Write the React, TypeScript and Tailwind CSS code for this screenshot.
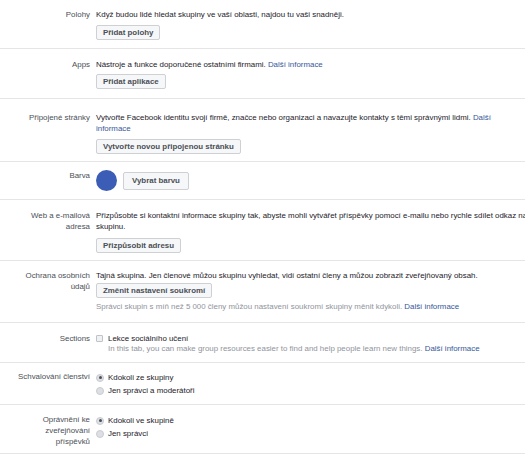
import React from 'react';

const font = { fontFamily: '"Liberation Sans", Arial, sans-serif' };

const Btn: React.FC<{ children: React.ReactNode; className?: string }> = ({ children, className = '' }) => (
  <button
    className={`inline-flex items-center h-[15px] px-[6px] bg-[#f6f7f9] border border-[#ced0d4] rounded-[2px] text-[7.9px] font-bold text-[#4b4f56] leading-none ${className}`}
  >
    {children}
  </button>
);

const Row: React.FC<{ label: React.ReactNode; children: React.ReactNode; className?: string }> = ({ label, children, className = '' }) => (
  <div className={`flex border-b border-[#e5e5e5] ${className}`}>
    <div className="w-[90px] shrink-0 text-right text-[#4b4f56] leading-[11px]">{label}</div>
    <div className="pl-[6px] flex-1 text-[#1d2129] leading-[11px]">{children}</div>
  </div>
);

const Link: React.FC<{ children: React.ReactNode }> = ({ children }) => (
  <span className="text-[#365899]">{children}</span>
);

const Radio: React.FC<{ checked?: boolean; children: React.ReactNode }> = ({ checked, children }) => (
  <div className="flex items-center gap-[4px] h-[13px]">
    <span className="w-[8px] h-[8px] rounded-full bg-[#dddfe2] border border-[#c8cbd0] flex items-center justify-center">
      {checked && <span className="w-[3px] h-[3px] rounded-full bg-[#4b4f56]" />}
    </span>
    <span>{children}</span>
  </div>
);

export default function App() {
  return (
    <div className="w-[525px] h-[457px] overflow-hidden bg-white text-[7.9px] whitespace-nowrap" style={font}>
      <div className="w-[560px]">
        <Row label="Polohy" className="pt-[9px] pb-[8px]">
          <div>Když budou lidé hledat skupiny ve vaší oblasti, najdou tu vaši snadněji.</div>
          <Btn className="mt-[5px]">Přidat polohy</Btn>
        </Row>

        <Row label="Apps" className="pt-[10px] pb-[9px]">
          <div>
            Nástroje a funkce doporučené ostatními firmami. <Link>Další informace</Link>
          </div>
          <Btn className="mt-[4px]">Přidat aplikace</Btn>
        </Row>

        <Row label="Připojené stránky" className="pt-[13px] pb-[7px]">
          <div>
            Vytvořte Facebook identitu svojí firmě, značce nebo organizaci a navazujte kontakty s těmi správnými lidmi. <Link>Další</Link>
            <br />
            <Link>informace</Link>
          </div>
          <Btn className="mt-[5px]">Vytvořte novou připojenou stránku</Btn>
        </Row>

        <Row label="Barva" className="pt-[8px] pb-[8px]">
          <div className="flex items-center gap-[6px]">
            <span className="w-[21px] h-[21px] rounded-full bg-[#3b5db5]" />
            <Btn className="h-[18px] px-[8px]">Vybrat barvu</Btn>
          </div>
        </Row>

        <Row
          label={
            <>
              Web a e-mailová
              <br />
              adresa
            </>
          }
          className="pt-[10px] pb-[7px]"
        >
          <div>
            Přizpůsobte si kontaktní informace skupiny tak, abyste mohli vytvářet příspěvky pomocí e-mailu nebo rychle sdílet odkaz na
            <br />
            skupinu.
          </div>
          <Btn className="mt-[6px]">Přizpůsobit adresu</Btn>
        </Row>

        <Row
          label={
            <>
              Ochrana osobních
              <br />
              údajů
            </>
          }
          className="pt-[9px] pb-[10px]"
        >
          <div>Tajná skupina. Jen členové můžou skupinu vyhledat, vidí ostatní členy a můžou zobrazit zveřejňovaný obsah.</div>
          <Btn className="mt-[2px]">Změnit nastavení soukromí</Btn>
          <div className="mt-[3px] text-[#90949c]">
            Správci skupin s míň než 5 000 členy můžou nastavení soukromí skupiny měnit kdykoli. <Link>Další informace</Link>
          </div>
        </Row>

        <Row label="Sections" className="pt-[10px] pb-[8px]">
          <div className="flex items-center gap-[5px] h-[10px]">
            <span className="w-[7px] h-[7px] bg-[#f0f1f3] border border-[#bec3c9] rounded-[1px]" />
            <span>Lekce sociálního učení</span>
          </div>
          <div className="pl-[12px] text-[#90949c]">
            In this tab, you can make group resources easier to find and help people learn new things. <Link>Další informace</Link>
          </div>
        </Row>

        <Row label="Schvalování členství" className="pt-[8px] pb-[7px]">
          <Radio checked>Kdokoli ze skupiny</Radio>
          <Radio>Jen správci a moderátoři</Radio>
        </Row>

        <Row
          label={
            <>
              Oprávnění ke
              <br />
              zveřejňování
              <br />
              příspěvků
            </>
          }
          className="pt-[9px] pb-[6px]"
        >
          <Radio checked>Kdokoli ve skupině</Radio>
          <Radio>Jen správci</Radio>
        </Row>
      </div>
    </div>
  );
}
